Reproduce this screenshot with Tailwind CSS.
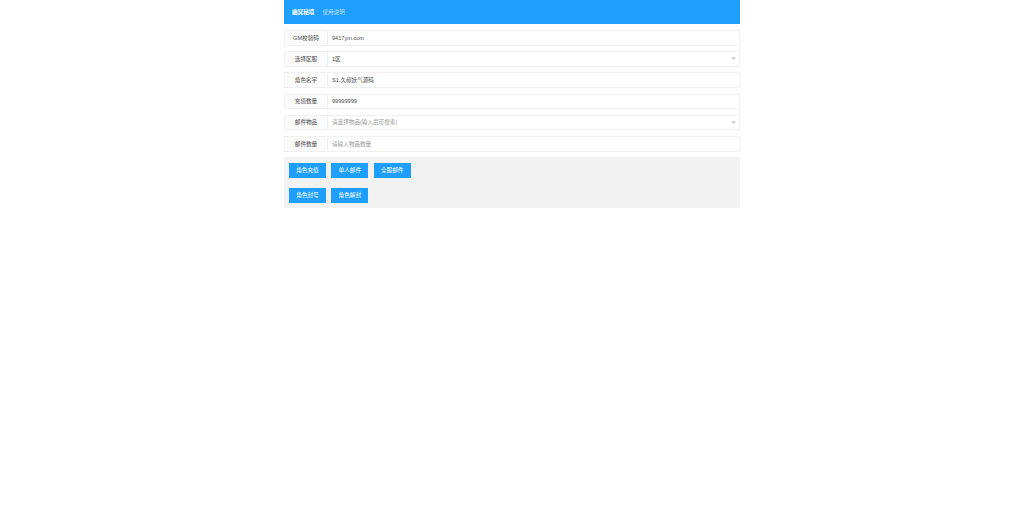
<!DOCTYPE html>
<html><head><meta charset="utf-8"><script src="https://cdn.jsdelivr.net/npm/@tailwindcss/browser@4"></script></head>
<body class="bg-white font-['Liberation_Sans','Noto_Sans_CJK_SC',sans-serif]">
<div class="w-[456px] ml-[284px] flex flex-col">
<div class="h-6 bg-[#1e9fff] flex items-center pl-2 gap-2 text-[5.6px]">
<span class="text-white font-bold">幽冥秘境</span><span class="text-white/70">使用说明</span>
</div>
<div class="flex flex-col gap-[5.6px] mt-[6px] text-[5.6px] text-[#4a4a4a]">
<div class="flex h-[15.6px] border border-[#f0f0f0]"><div class="w-[43px] bg-[#fbfbfb] border-r border-[#f0f0f0] flex items-center justify-center">GM校验码</div><div class="flex-1 flex items-center pl-[4px]">9417ym.com</div></div>
<div class="flex h-[15.6px] border border-[#f0f0f0]"><div class="w-[43px] bg-[#fbfbfb] border-r border-[#f0f0f0] flex items-center justify-center">选择区服</div><div class="flex-1 flex items-center pl-[4px]">1区</div><svg class="w-[5px] h-[3px] self-center mr-[3px]" viewBox="0 0 5 3"><path d="M0 .5h5L2.5 2.8z" fill="#c2c2c2"/></svg></div>
<div class="flex h-[15.6px] border border-[#f0f0f0]"><div class="w-[43px] bg-[#fbfbfb] border-r border-[#f0f0f0] flex items-center justify-center">角色名字</div><div class="flex-1 flex items-center pl-[4px]">S1.久叔妖气源码</div></div>
<div class="flex h-[15.6px] border border-[#f0f0f0]"><div class="w-[43px] bg-[#fbfbfb] border-r border-[#f0f0f0] flex items-center justify-center">充值数量</div><div class="flex-1 flex items-center pl-[4px]">99999999</div></div>
<div class="flex h-[15.6px] border border-[#f0f0f0]"><div class="w-[43px] bg-[#fbfbfb] border-r border-[#f0f0f0] flex items-center justify-center">邮件物品</div><div class="flex-1 flex items-center pl-[4px] text-[#999]">请选择物品(输入后可搜索)</div><svg class="w-[5px] h-[3px] self-center mr-[3px]" viewBox="0 0 5 3"><path d="M0 .5h5L2.5 2.8z" fill="#c2c2c2"/></svg></div>
<div class="flex h-[15.6px] border border-[#f0f0f0]"><div class="w-[43px] bg-[#fbfbfb] border-r border-[#f0f0f0] flex items-center justify-center">邮件数量</div><div class="flex-1 flex items-center pl-[4px] text-[#999]">请输入物品数量</div></div>
</div>
<div class="mt-[5.4px] h-[51px] bg-[#f2f2f2] pt-[6px] pl-[5px] flex flex-col gap-[10px] text-[5.6px] text-white">
<div class="flex gap-[5.6px]"><div class="w-[36.8px] h-[15px] bg-[#1e9fff] flex items-center justify-center">角色充值</div><div class="w-[36.8px] h-[15px] bg-[#1e9fff] flex items-center justify-center">单人邮件</div><div class="w-[36.8px] h-[15px] bg-[#1e9fff] flex items-center justify-center">全服邮件</div></div>
<div class="flex gap-[5.6px]"><div class="w-[36.8px] h-[15px] bg-[#1e9fff] flex items-center justify-center">角色封号</div><div class="w-[36.8px] h-[15px] bg-[#1e9fff] flex items-center justify-center">角色解封</div></div>
</div>
</div>
</body></html>
